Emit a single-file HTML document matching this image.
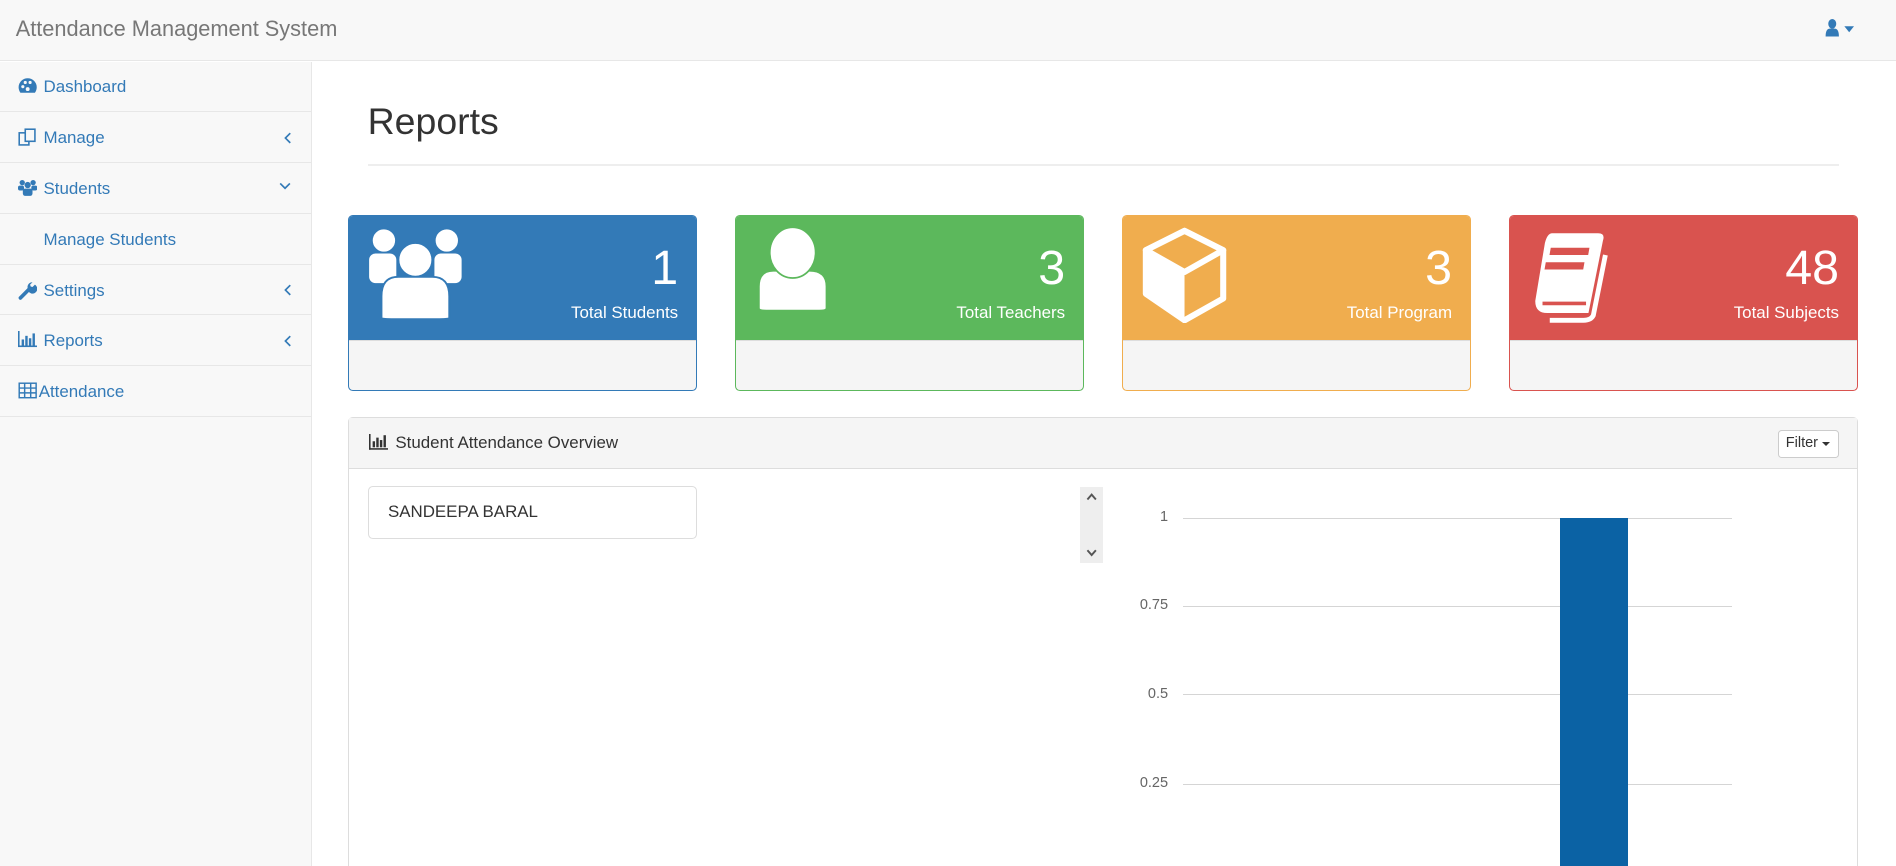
<!DOCTYPE html>
<html><head><meta charset="utf-8"><style>
html,body{margin:0;padding:0;width:1896px;height:865px;overflow:hidden;background:#fff;font-family:"Liberation Sans",Arial,sans-serif}
#w{position:absolute;left:0;top:0;width:1568px;height:716px;zoom:1.2092;overflow:hidden}
.a{position:absolute}
.nav{left:0;top:0;width:1568px;height:50px;background:#f8f8f8;border-bottom:1px solid #e7e7e7}
.brand{left:13px;top:13px;font-size:18px;color:#777}
.side{left:0;top:51px;width:257px;height:670px;background:#f8f8f8;border-right:1px solid #e7e7e7}
.item{position:absolute;left:0;width:257px;height:41px;border-bottom:1px solid #e7e7e7;color:#337ab7;font-size:14px}
.item span{position:absolute;left:36px;top:13px}
.item svg{position:absolute;left:15px;top:13px}
.item svg.chev{left:234px;top:16px}
.card{position:absolute;top:178px;width:287px;height:144px;border:1px solid;border-radius:4px;overflow:hidden;background:#f5f5f5}
.card .h{position:absolute;left:0;top:0;width:100%;height:102px;border-bottom:1px solid #ddd}
.num{position:absolute;right:15px;top:20px;font-size:40px;color:#fff}
.lbl{position:absolute;right:15px;top:72px;font-size:14px;color:#fff}
.card svg{position:absolute;left:15px;top:8px}
.gl{position:absolute;left:978px;width:454px;height:1px;background:#d5d5d5}
.yl{position:absolute;width:40px;text-align:right;left:926px;font-size:12px;color:#666}
</style></head><body><div id="w">
<div class="a nav"></div>
<div class="a brand">Attendance Management System</div>
<svg class="a" style="left:1509px;top:16px" width="30" height="16" viewBox="0 0 30 16"><ellipse cx="6" cy="4" rx="3.3" ry="4" fill="#337ab7"/><path d="M0.5 14.5 Q0.5 8 4 8 L8 8 Q11.5 8 11.5 14.5 Z" fill="#337ab7"/><path d="M16 6 L24 6 L20 11Z" fill="#337ab7"/></svg>
<div class="a side">
 <div class="item" style="top:0"><svg width="16" height="14" viewBox="0 0 16 14"><path d="M8 1A7.5 7.5 0 0 0 .5 8.5 7.5 7.5 0 0 0 2 13h12a7.5 7.5 0 0 0 1.5-4.5A7.5 7.5 0 0 0 8 1z" fill="#337ab7"/><circle cx="4" cy="8" r="1.3" fill="#f8f8f8"/><circle cx="6" cy="4.5" r="1.3" fill="#f8f8f8"/><circle cx="10" cy="4.5" r="1.3" fill="#f8f8f8"/><circle cx="8" cy="10" r="1.6" fill="#f8f8f8"/></svg><span>Dashboard</span></div>
 <div class="item" style="top:42px"><svg width="16" height="16" viewBox="0 0 16 16" fill="none" stroke="#337ab7" stroke-width="1.3"><rect x="1" y="4" width="8" height="10"/><rect x="6" y="1" width="8" height="10" fill="#f8f8f8"/></svg><span>Manage</span><svg class="chev" width="8" height="10" viewBox="0 0 8 10"><path d="M6 1 L2 5 L6 9" fill="none" stroke="#337ab7" stroke-width="1.4"/></svg></div>
 <div class="item" style="top:84px"><svg width="16" height="14" viewBox="0 0 16 14" fill="#337ab7"><circle cx="3.5" cy="3" r="2.2"/><circle cx="12.5" cy="3" r="2.2"/><circle cx="8" cy="5" r="2.6"/><rect x="0" y="5.5" width="5" height="4" rx="1.5"/><rect x="11" y="5.5" width="5" height="4" rx="1.5"/><rect x="4" y="8" width="8" height="6" rx="2"/></svg><span>Students</span><svg class="chev" style="left:231px;top:15px" width="10" height="8" viewBox="0 0 10 8"><path d="M1 2 L5 6 L9 2" fill="none" stroke="#337ab7" stroke-width="1.4"/></svg></div>
 <div class="item" style="top:126px"><span>Manage Students</span></div>
 <div class="item" style="top:168px"><svg width="16" height="16" viewBox="0 0 16 16"><path d="M2 14 L9 7" stroke="#337ab7" stroke-width="3" stroke-linecap="round"/><path d="M8 6 A4 4 0 1 0 14 3 L12 5 10.5 4.5 10 3 12 1 A4 4 0 0 0 8 6Z" fill="#337ab7"/></svg><span>Settings</span><svg class="chev" width="8" height="10" viewBox="0 0 8 10"><path d="M6 1 L2 5 L6 9" fill="none" stroke="#337ab7" stroke-width="1.4"/></svg></div>
 <div class="item" style="top:210px"><svg width="16" height="14" viewBox="0 0 16 14" fill="#337ab7"><rect x="0" y="0" width="1.3" height="13"/><rect x="0" y="12" width="16" height="1.3"/><rect x="3" y="7" width="2" height="5"/><rect x="6" y="4" width="2" height="8"/><rect x="9" y="6" width="2" height="6"/><rect x="12" y="2" width="2" height="10"/></svg><span>Reports</span><svg class="chev" width="8" height="10" viewBox="0 0 8 10"><path d="M6 1 L2 5 L6 9" fill="none" stroke="#337ab7" stroke-width="1.4"/></svg></div>
 <div class="item" style="top:252px"><svg width="16" height="14" viewBox="0 0 16 14" fill="none" stroke="#337ab7" stroke-width="1.2"><rect x="1" y="1" width="14" height="12"/><path d="M1 5H15M1 9H15M5.5 1V13M10.5 1V13"/></svg><span style="left:32px">Attendance</span></div>
</div>
<div class="a" style="left:304px;top:83px;font-size:31px;color:#333">Reports</div>
<div class="a" style="left:304px;top:136px;width:1217px;height:1px;background:#eee"></div>

<div class="card" style="left:288px;border-color:#337ab7"><div class="h" style="background:#337ab7"></div>
<svg width="80" height="78" viewBox="0 0 80 78" fill="#fff" stroke="#337ab7" stroke-width="1.5"><circle cx="14" cy="12" r="10"/><circle cx="66" cy="12" r="10"/><rect x="1" y="22" width="24" height="26" rx="6"/><rect x="55" y="22" width="24" height="26" rx="6"/><circle cx="40" cy="28" r="14"/><path d="M12 76 L12 58 Q12 42 26 42 L54 42 Q68 42 68 58 L68 76 Q68 77 60 77 L20 77 Q12 77 12 76Z"/></svg>
<div class="num">1</div><div class="lbl">Total Students</div></div>

<div class="card" style="left:608px;border-color:#5cb85c"><div class="h" style="background:#5cb85c"></div>
<svg width="64" height="72" viewBox="0 0 64 72" fill="#fff" stroke="#5cb85c" stroke-width="1.5"><path d="M4 68 L4 50 Q4 37 16 37 L46 37 Q60 37 60 50 L60 68 Q60 70 54 70 L10 70 Q4 70 4 68Z"/><ellipse cx="32" cy="22" rx="19" ry="21"/></svg>
<div class="num">3</div><div class="lbl">Total Teachers</div></div>

<div class="card" style="left:928px;border-color:#f0ad4e"><div class="h" style="background:#f0ad4e"></div>
<svg width="72" height="80" viewBox="0 0 72 80"><path d="M36 4 L68 20 L68 60 L36 78 L4 56 L4 20 Z" fill="none" stroke="#fff" stroke-width="5" stroke-linejoin="round"/><path d="M36 4 L68 20 L36 38 L4 20 Z" fill="none" stroke="#fff" stroke-width="5" stroke-linejoin="round"/><path d="M4 20 L36 38 L36 76 L4 56Z" fill="#fff"/></svg>
<div class="num">3</div><div class="lbl">Total Program</div></div>

<div class="card" style="left:1248px;border-color:#d9534f"><div class="h" style="background:#d9534f"></div>
<svg width="80" height="80" viewBox="0 0 80 80"><path d="M20 6 L58 6 Q64 6 62 12 L50 72 L16 72 Q6 72 6 62 L14 14 Q16 6 20 6Z" fill="#fff"/><path d="M64 24 L54 74 Q52 78 46 78 L18 78" fill="none" stroke="#fff" stroke-width="4"/><rect x="22" y="18" width="32" height="6" fill="#d9534f" transform="skewX(-10)"/><rect x="20" y="30" width="32" height="6" fill="#d9534f" transform="skewX(-10)"/><path d="M12 64 L48 64" stroke="#d9534f" stroke-width="3"/></svg>
<div class="num">48</div><div class="lbl">Total Subjects</div></div>

<div class="a" style="left:288px;top:345px;width:1247px;height:400px;border:1px solid #ddd;border-radius:4px"></div>
<div class="a" style="left:289px;top:346px;width:1247px;height:41px;background:#f5f5f5;border-bottom:1px solid #ddd"></div>
<svg class="a" style="left:305px;top:359px" width="16" height="13" viewBox="0 0 16 13" fill="#333"><rect x="0" y="0" width="1.3" height="13"/><rect x="0" y="11.7" width="16" height="1.3"/><rect x="3" y="6" width="2" height="5"/><rect x="6" y="3" width="2" height="8"/><rect x="9" y="5" width="2" height="6"/><rect x="12" y="1" width="2" height="10"/></svg>
<div class="a" style="left:327px;top:358px;font-size:14px;color:#333">Student Attendance Overview</div>
<div class="a" style="left:1470px;top:356px;width:49px;height:21px;border:1px solid #ccc;border-radius:3px;background:#fff;font-size:12px;color:#333;line-height:21px;text-indent:6px">Filter<span style="display:inline-block;margin-left:3px;width:0;height:0;border-left:4px solid transparent;border-right:4px solid transparent;border-top:4px solid #333;vertical-align:middle;text-indent:0"></span></div>
<div class="a" style="left:304px;top:402px;width:271px;height:42px;border:1px solid #ddd;border-radius:4px;font-size:14px;color:#333;line-height:42px;text-indent:16px">SANDEEPA BARAL</div>
<div class="a" style="left:893px;top:403px;width:19px;height:63px;background:#eee"></div>
<svg class="a" style="left:897px;top:406px" width="11" height="56" viewBox="0 0 11 56"><path d="M2 7 L5.5 3 L9 7 M2 49 L5.5 53 L9 49" fill="none" stroke="#555" stroke-width="1.6"/></svg>

<div class="gl" style="top:428px"></div><div class="gl" style="top:501px"></div><div class="gl" style="top:574px"></div><div class="gl" style="top:648px"></div>
<div class="yl" style="top:421px">1</div><div class="yl" style="top:494px">0.75</div><div class="yl" style="top:567px">0.5</div><div class="yl" style="top:641px">0.25</div>
<div class="a" style="left:1290px;top:428px;width:56px;height:300px;background:#0b62a4"></div>
</div></body></html>
